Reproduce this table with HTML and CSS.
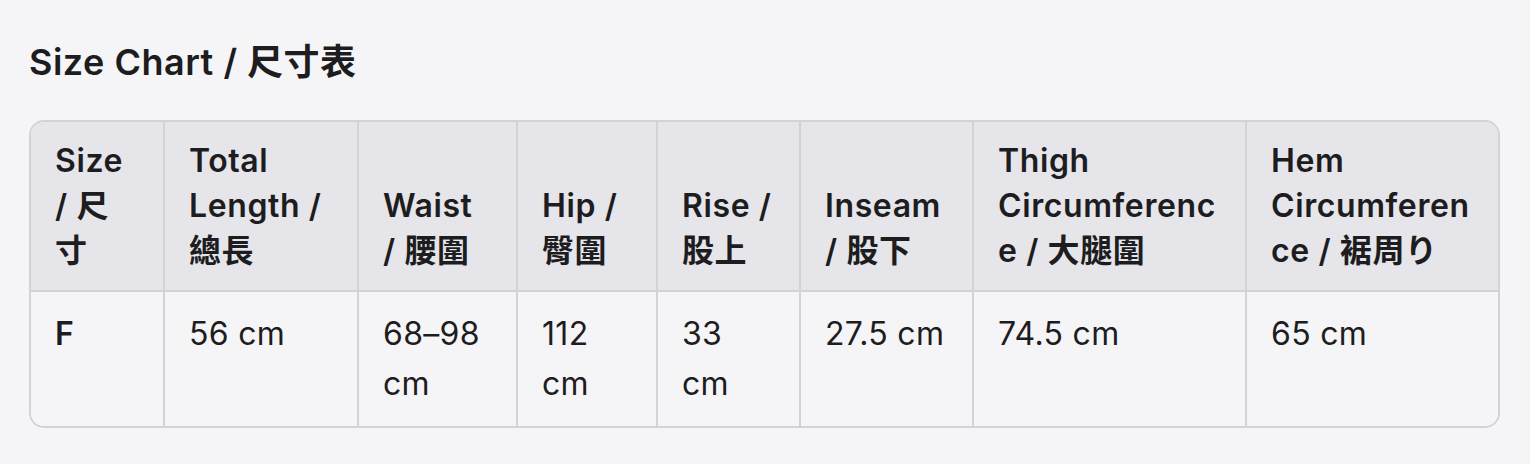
FILE: index.html
```html
<!DOCTYPE html>
<html lang="zh-Hant">
<head>
<meta charset="utf-8">
<title>Size Chart</title>
<link rel="stylesheet" href="styles.css">
</head>
<body>
<main class="page">
  <h2 class="title">Size Chart / 尺寸表</h2>
  <div class="table-wrap">
    <table class="chart">
      <colgroup>
        <col class="c1"><col class="c2"><col class="c3"><col class="c4">
        <col class="c5"><col class="c6"><col class="c7"><col class="c8">
      </colgroup>
      <thead>
        <tr>
          <th>Size / 尺寸</th>
          <th>Total Length / 總長</th>
          <th>Waist / 腰圍</th>
          <th>Hip / 臀圍</th>
          <th>Rise / 股上</th>
          <th>Inseam / 股下</th>
          <th>Thigh Circumference / 大腿圍</th>
          <th>Hem Circumference / 裾周り</th>
        </tr>
      </thead>
      <tbody>
        <tr>
          <td class="size">F</td>
          <td>56 cm</td>
          <td>68–98 cm</td>
          <td>112 cm</td>
          <td>33 cm</td>
          <td>27.5 cm</td>
          <td>74.5 cm</td>
          <td>65 cm</td>
        </tr>
      </tbody>
    </table>
  </div>
</main>
</body>
</html>
```

FILE: styles.css
```css
* { box-sizing: border-box; }

html, body {
  margin: 0;
  background: #f5f5f7;
}

body {
  font-family: Inter, "Noto Sans CJK TC", "Noto Sans CJK JP", sans-serif;
  color: #1d1d1f;
}

.page {
  padding: 41px 30px 30px 29px;
}

.title {
  margin: 0 0 36px;
  font-size: 36px;
  line-height: 43px;
  font-weight: 600;
  letter-spacing: 0.5px;
}

.table-wrap {
  border: 2px solid #d2d2d7;
  border-radius: 15px;
  overflow: hidden;
  width: 1471px;
}

.chart {
  width: 100%;
  border-collapse: collapse;
  table-layout: fixed;
}

.c1 { width: 133px; }
.c2 { width: 194px; }
.c3 { width: 159px; }
.c4 { width: 140px; }
.c5 { width: 143px; }
.c6 { width: 173px; }
.c7 { width: 273px; }
.c8 { width: auto; }

.chart th,
.chart td {
  padding: 17px 26px 17px 24px;
  text-align: left;
  font-size: 32px;
  overflow-wrap: anywhere;
  border-right: 2px solid #d2d2d7;
}

.chart th:last-child,
.chart td:last-child {
  border-right: none;
}

.chart th {
  padding-top: 16px;
  background: #e5e5ea;
  font-weight: 600;
  line-height: 45px;
  letter-spacing: 0.6px;
  vertical-align: bottom;
  border-bottom: 2px solid #d2d2d7;
}

.chart td {
  background: #f5f5f7;
  font-weight: 400;
  line-height: 50px;
  letter-spacing: 0.3px;
  vertical-align: top;
}

.chart td.size {
  font-weight: 600;
}
```
